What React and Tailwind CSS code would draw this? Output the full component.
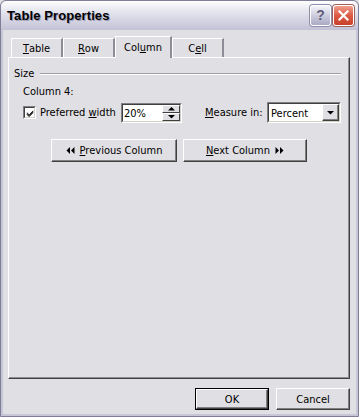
import React from 'react'

const ui = { fontFamily: '"DejaVu Sans Condensed", "DejaVu Sans", sans-serif', fontStretch: 'condensed' }

function Mn({ children }) {
  return <span className="underline underline-offset-[1px] decoration-1">{children}</span>
}

function Tab({ children, active }) {
  if (active) {
    return (
      <div className="relative z-10 -mb-px flex h-[22px] w-[57px] items-center justify-center border-l border-t border-r-2 border-l-white border-t-white border-r-[#8d8d98] bg-[#e0dfe3] pb-[1px]">
        {children}
      </div>
    )
  }
  return (
    <div className="flex h-[19px] w-[52px] items-center justify-center border-l border-t border-r-2 border-l-white border-t-white border-r-[#8d8d98] bg-[#e0dfe3] pt-[1px]">
      {children}
    </div>
  )
}

function Button({ children, className = '', isDefault }) {
  return (
    <div className={`flex items-center justify-center ${isDefault ? 'border border-black' : ''} ${className}`}>
      <div className="flex h-full w-full items-center justify-center border border-l-white border-t-white border-r-[#404040] border-b-[#404040] shadow-[inset_-1px_-1px_0_#808080]">
        {children}
      </div>
    </div>
  )
}

function Sunken({ className = '', children }) {
  return (
    <div className={`border border-l-[#808080] border-t-[#808080] border-r-white border-b-white ${className}`}>
      <div className="flex h-full w-full border border-l-[#404040] border-t-[#404040] border-r-[#d4d0c8] border-b-[#d4d0c8] bg-white">
        {children}
      </div>
    </div>
  )
}

function Tri({ dir }) {
  const d = {
    up: 'M0 3.5 L3.5 0 L7 3.5 Z',
    down: 'M0 0 L7 0 L3.5 3.5 Z',
  }[dir]
  return (
    <svg width="7" height="4" viewBox="0 0 7 4">
      <path d={d} fill="#000" />
    </svg>
  )
}

function Double({ dir }) {
  return (
    <svg width="9" height="7" viewBox="0 0 9 7">
      {dir === 'left' ? (
        <>
          <path d="M4 0 L0.5 3.5 L4 7 Z" fill="#000" />
          <path d="M8.5 0 L5 3.5 L8.5 7 Z" fill="#000" />
        </>
      ) : (
        <>
          <path d="M0.5 0 L4 3.5 L0.5 7 Z" fill="#000" />
          <path d="M5 0 L8.5 3.5 L5 7 Z" fill="#000" />
        </>
      )}
    </svg>
  )
}

export default function App() {
  return (
    <div className="h-[417px] w-[359px] overflow-hidden bg-[#e0dfe3] text-[11px] leading-[13px] text-black" style={ui}>
      <div className="flex h-full w-full flex-col rounded-t-[6px] border border-[#7e7e96]">
        {/* title bar */}
        <div className="flex h-[29px] shrink-0 items-center justify-between rounded-t-[6px] bg-[linear-gradient(180deg,#ffffff_0%,#ececf3_25%,#d8d8e6_60%,#c2c2d6_100%)] pl-[6px] pr-[4px]">
          <span
            className="text-[13px] font-bold tracking-[0.1px] text-black [text-shadow:1px_1px_0_#9c9cb4]"
            style={{ fontFamily: '"Liberation Sans", Arial, sans-serif' }}
          >
            Table Properties
          </span>
          <div className="flex items-center gap-[1px]">
            <div className="flex h-[21px] w-[21px] items-center justify-center rounded-[3px] border border-white bg-[linear-gradient(180deg,#f4f4fa_0%,#c9c9dc_55%,#a9a9c4_100%)] shadow-[0_0_0_1px_#8e8ea8]">
              <span className="text-[14px] font-bold text-[#5e5e78]" style={{ fontFamily: '"Liberation Sans", Arial, sans-serif' }}>?</span>
            </div>
            <div className="ml-[1px] flex h-[21px] w-[21px] items-center justify-center rounded-[3px] border border-white bg-[linear-gradient(180deg,#ef9f8f_0%,#dc5b45_50%,#c8402c_100%)] shadow-[0_0_0_1px_#a0605a]">
              <svg width="11" height="11" viewBox="0 0 11 11">
                <path d="M1.5 1.5 L9.5 9.5 M9.5 1.5 L1.5 9.5" stroke="#fff" strokeWidth="2.2" strokeLinecap="square" />
              </svg>
            </div>
          </div>
        </div>

        {/* body */}
        <div className="flex flex-1 flex-col border-x-[2px] border-b-[2px] border-[#c6c6d6] px-[5px] pt-[5px]">
          {/* tabs */}
          <div className="flex h-[22px] items-end pl-[3px]">
            <Tab><Mn>T</Mn>able</Tab>
            <Tab><Mn>R</Mn>ow</Tab>
            <Tab active>Col<Mn>u</Mn>mn</Tab>
            <Tab>C<Mn>e</Mn>ll</Tab>
          </div>

          {/* panel */}
          <div className="flex h-[322px] w-[342px] flex-col border border-l-white border-t-white border-r-[#404040] border-b-[#404040] shadow-[inset_-1px_-1px_0_#8d8d98]">
            <div className="mt-[9px] flex h-[13px] items-center gap-[6px] pl-[5px] pr-[8px]">
              <span>Size</span>
              <div className="h-[2px] flex-1 border-t border-b border-t-[#a0a0a8] border-b-white" />
            </div>

            <div className="ml-[14px] mt-[5px] h-[13px]">Column 4:</div>

            <div className="ml-[14px] mt-[4px] flex h-[21px] items-center">
              <div className="flex w-[98px] items-center gap-[4px]">
                <Sunken className="h-[13px] w-[13px]">
                  <svg width="9" height="9" viewBox="0 0 9 9" className="ml-[1px] mt-[1px]">
                    <path d="M1 3.5 L3.5 6 L8 1.5 M1 4.5 L3.5 7 L8 2.5 M1 5.5 L3.5 8 L8 3.5" stroke="#000" strokeWidth="1" fill="none" />
                  </svg>
                </Sunken>
                <span>Preferred <Mn>w</Mn>idth</span>
              </div>
              <Sunken className="h-[20px] w-[61px]">
                <span className="flex-1 pl-[1px] pt-[2px]">20%</span>
                <div className="flex w-[18px] flex-col">
                  <div className="flex h-1/2 items-center justify-center border border-l-white border-t-white border-r-[#404040] border-b-[#404040] bg-[#e0dfe3]">
                    <Tri dir="up" />
                  </div>
                  <div className="flex h-1/2 items-center justify-center border border-l-white border-t-white border-r-[#404040] border-b-[#404040] bg-[#e0dfe3]">
                    <Tri dir="down" />
                  </div>
                </div>
              </Sunken>
              <span className="ml-[23px] w-[62px]"><Mn>M</Mn>easure in:</span>
              <Sunken className="h-[21px] w-[74px]">
                <span className="flex-1 pl-[2px] pt-[3px]">Percent</span>
                <div className="flex w-[17px] items-center justify-center border border-l-white border-t-white border-r-[#404040] border-b-[#404040] bg-[#e0dfe3] shadow-[inset_-1px_-1px_0_#808080]">
                  <Tri dir="down" />
                </div>
              </Sunken>
            </div>

            <div className="ml-[42px] mt-[16px] flex h-[23px] gap-[6px]">
              <Button className="w-[126px]">
                <span className="flex items-center gap-[5px]">
                  <Double dir="left" />
                  <span><Mn>P</Mn>revious Column</span>
                </span>
              </Button>
              <Button className="w-[124px]">
                <span className="flex items-center gap-[5px]">
                  <span><Mn>N</Mn>ext Column</span>
                  <Double dir="right" />
                </span>
              </Button>
            </div>
          </div>

          {/* footer */}
          <div className="mt-[9px] flex justify-end gap-[7px] pr-[1px]">
            <Button isDefault className="h-[22px] w-[74px]">OK</Button>
            <Button className="h-[22px] w-[74px]">Cancel</Button>
          </div>
        </div>
      </div>
    </div>
  )
}
